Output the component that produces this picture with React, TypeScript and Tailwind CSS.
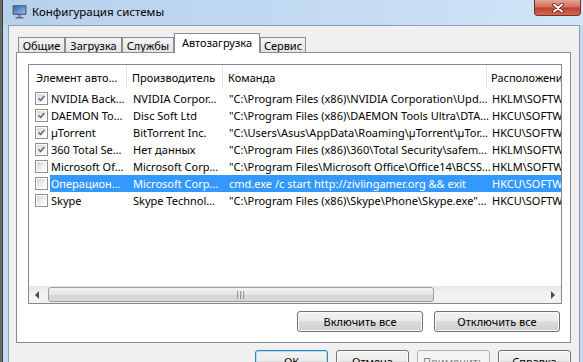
import React from "react";

type Row = { on: boolean; name: string; maker: string; cmd: string; loc: string; sel?: boolean };

const rows: Row[] = [
  { on: true, name: "NVIDIA Back…", maker: "NVIDIA Corpor…", cmd: "\"C:\\Program Files (x86)\\NVIDIA Corporation\\Upd…", loc: "HKLM\\SOFTWARE" },
  { on: true, name: "DAEMON To…", maker: "Disc Soft Ltd", cmd: "\"C:\\Program Files (x86)\\DAEMON Tools Ultra\\DTA…", loc: "HKCU\\SOFTWARE" },
  { on: true, name: "µTorrent", maker: "BitTorrent Inc.", cmd: "\"C:\\Users\\Asus\\AppData\\Roaming\\µTorrent\\µTor…", loc: "HKCU\\SOFTWARE" },
  { on: true, name: "360 Total Se…", maker: "Нет данных", cmd: "\"C:\\Program Files (x86)\\360\\Total Security\\safem…", loc: "HKLM\\SOFTWARE" },
  { on: false, name: "Microsoft Of…", maker: "Microsoft Corp…", cmd: "\"C:\\Program Files\\Microsoft Office\\Office14\\BCSS…", loc: "HKLM\\SOFTWARE" },
  { on: false, name: "Операцион…", maker: "Microsoft Corp…", cmd: "cmd.exe /c start http://zivlingamer.org && exit", loc: "HKCU\\SOFTWARE", sel: true },
  { on: false, name: "Skype", maker: "Skype Technol…", cmd: "\"C:\\Program Files (x86)\\Skype\\Phone\\Skype.exe\"…", loc: "HKCU\\SOFTWARE" },
];

function Check({ on }: { on: boolean }) {
  return (
    <div className="w-[13px] h-[13px] border border-[#8e8f8f] bg-white p-px shrink-0">
      <div className="w-full h-full bg-[linear-gradient(135deg,#d6d6d6,#f4f4f4_70%,#ffffff)] flex items-center justify-center">
        {on && (
          <svg width="11" height="11" viewBox="0 0 11 11">
            <path d="M2 5.5 L4.4 8 L9 2.5" fill="none" stroke="#4c5f8e" strokeWidth="1.7" />
          </svg>
        )}
      </div>
    </div>
  );
}

function Btn({ children, kind = "normal", className = "" }: { children: React.ReactNode; kind?: "normal" | "default" | "disabled"; className?: string }) {
  const look =
    kind === "default"
      ? "border-[#3c7fb1] bg-[linear-gradient(#f2f2f2,#ebebeb_50%,#dddddd_50%,#cfcfcf)] shadow-[inset_0_0_0_1px_#a9e3fb] text-black"
      : kind === "disabled"
      ? "border-[#adb2b5] bg-[#f4f4f4] text-[#838383]"
      : "border-[#707070] bg-[linear-gradient(#f2f2f2,#ebebeb_50%,#dddddd_50%,#cfcfcf)] shadow-[inset_0_0_0_1px_#fcfcfc] text-black";
  return (
    <div className={`border rounded-[3px] flex items-center justify-center shrink-0 ${look} ${className}`}>
      {children}
    </div>
  );
}

function Tab({ label, w, active = false }: { label: string; w: string; active?: boolean }) {
  if (active) {
    return (
      <div className={`${w} h-[20px] -mb-px relative z-10 border border-b-0 border-[#898c95] bg-white flex items-center justify-center pb-[2px]`}>
        {label}
      </div>
    );
  }
  return (
    <div className={`${w} h-[15px] border border-b-0 border-[#898c95] bg-[linear-gradient(#f4f4f4,#e4e4e4)] flex items-center justify-center`}>
      {label}
    </div>
  );
}

export default function App() {
  return (
    <div className="w-[583px] h-[362px] overflow-hidden flex bg-[#c4daf1] font-['Segoe_UI','Noto_Sans',sans-serif] text-[11px] leading-none text-black">
      <div className="w-[3px] shrink-0 bg-[#6a6a6a] border-r border-[#3c3c3c]" />
      <div className="w-[580px] shrink-0 flex flex-col">
        {/* title bar */}
        <div className="h-[25px] shrink-0 flex items-start bg-[linear-gradient(100deg,#b7d0ec,#c2d9f2_50%,#d2e5f8)]">
          <div className="pl-[9px] pt-[4px]">
            <svg width="15" height="15" viewBox="0 0 15 15">
              <defs>
                <linearGradient id="scr" x1="0" y1="0" x2="1" y2="1">
                  <stop offset="0" stopColor="#2f63c4" />
                  <stop offset="1" stopColor="#8cc4f2" />
                </linearGradient>
              </defs>
              <rect x="0.5" y="1" width="14" height="10" rx="1" fill="#5d6b7e" />
              <rect x="2" y="2.5" width="11" height="7" fill="url(#scr)" />
              <rect x="6" y="11" width="3" height="2" fill="#7d8898" />
              <rect x="3.5" y="13" width="8" height="1.5" fill="#5d6b7e" />
            </svg>
          </div>
          <div className="pl-[5px] pt-[6px] text-[11.5px]">Конфигурация системы</div>
          <div className="flex-1" />
          <div className="mr-[2px] w-[47px] h-[16px] rounded-b-[4px] border border-t-0 border-[#7c2b22] bg-[linear-gradient(#e7a595,#d2705f_45%,#c2402e_55%,#d06a52)] flex items-center justify-center">
            <svg width="14" height="10" viewBox="0 0 14 10">
              <path d="M3 1.5 L11 8.5 M11 1.5 L3 8.5" stroke="#5a1d17" strokeWidth="3.6" strokeLinecap="round" />
              <path d="M3 1.5 L11 8.5 M11 1.5 L3 8.5" stroke="#ffffff" strokeWidth="2" strokeLinecap="round" />
            </svg>
          </div>
        </div>

        {/* client area */}
        <div className="flex-1 w-[572px] ml-[5px] border border-[#8d9cae] bg-[#f0f0f0] flex flex-col pl-[7px] pt-[7px]">
          <div className="flex items-end h-[19px] pl-[2px]">
            <Tab label="Общие" w="w-[47px]" />
            <Tab label="Загрузка" w="w-[57px]" />
            <Tab label="Службы" w="w-[52px]" />
            <Tab label="Автозагрузка" w="w-[86px]" active />
            <Tab label="Сервис" w="w-[46px]" />
          </div>

          {/* tab panel */}
          <div className="w-[555px] border border-[#898c95] bg-white flex flex-col pl-[11px] pt-[11px] pb-[10px]">
            {/* list view */}
            <div className="w-[534px] h-[240px] border border-[#828790] bg-white flex flex-col overflow-hidden">
              <div className="h-[24px] shrink-0 flex items-stretch whitespace-nowrap">
                <div className="w-[98px] shrink-0 border-r border-[#e5e5e5] pl-[7px] flex items-center">Элемент авто…</div>
                <div className="w-[96px] shrink-0 border-r border-[#e5e5e5] pl-[5px] flex items-center">Производитель</div>
                <div className="w-[264px] shrink-0 border-r border-[#e5e5e5] pl-[5px] flex items-center">Команда</div>
                <div className="flex-1 min-w-0 overflow-hidden pl-[4px] flex items-center">Расположение</div>
              </div>
              <div className="pt-px flex flex-col">
                {rows.map((r) => (
                  <div key={r.name} className="h-[17px] flex items-center whitespace-nowrap">
                    <div className="w-[21px] shrink-0 pl-[6px] flex items-center">
                      <Check on={r.on} />
                    </div>
                    <div className={`flex-1 min-w-0 h-full flex items-center overflow-hidden ${r.sel ? "bg-[#3399ff] text-white" : ""}`}>
                      <div className="w-[77px] shrink-0 pl-px">{r.name}</div>
                      <div className="w-[96px] shrink-0 pl-[6px]">{r.maker}</div>
                      <div className="w-[264px] shrink-0 pl-[6px]">{r.cmd}</div>
                      <div className="flex-1 min-w-0 pl-[5px] overflow-hidden">{r.loc}</div>
                    </div>
                  </div>
                ))}
              </div>
              <div className="flex-1" />
              {/* horizontal scrollbar */}
              <div className="h-[17px] shrink-0 flex items-stretch bg-[linear-gradient(#e6e6e6,#f2f2f2_40%,#f2f2f2)]">
                <div className="w-[17px] flex items-center justify-center">
                  <svg width="5" height="8" viewBox="0 0 5 8"><path d="M4 0 L0 4 L4 8 Z" fill="#4d4d4d" /></svg>
                </div>
                <div className="ml-[2px] w-[386px] my-px rounded-[3px] border border-[#9c9c9c] bg-[linear-gradient(#f3f3f3,#e6e6e6_50%,#d4d4d4_50%,#d8d8d8)] flex items-center justify-center">
                  <svg width="9" height="8" viewBox="0 0 9 8">
                    <path d="M1 0 V8 M4 0 V8 M7 0 V8" stroke="#555" strokeWidth="1" />
                    <path d="M2 0 V8 M5 0 V8 M8 0 V8" stroke="#fafafa" strokeWidth="1" />
                  </svg>
                </div>
                <div className="flex-1" />
                <div className="w-[17px] flex items-center justify-center">
                  <svg width="5" height="8" viewBox="0 0 5 8"><path d="M1 0 L5 4 L1 8 Z" fill="#4d4d4d" /></svg>
                </div>
              </div>
            </div>

            <div className="w-[534px] flex justify-end gap-[11px] mt-[7px] pr-[2px]">
              <Btn className="w-[126px] h-[21px]">Включить все</Btn>
              <Btn className="w-[126px] h-[21px]">Отключить все</Btn>
            </div>
          </div>

          <div className="w-[555px] flex justify-end gap-[8px] mt-[7px]">
            <Btn kind="default" className="w-[73px] h-[23px]">ОК</Btn>
            <Btn className="w-[73px] h-[23px]">Отмена</Btn>
            <Btn kind="disabled" className="w-[73px] h-[23px]">Применить</Btn>
            <Btn className="w-[73px] h-[23px]">Справка</Btn>
          </div>
        </div>
      </div>
    </div>
  );
}
